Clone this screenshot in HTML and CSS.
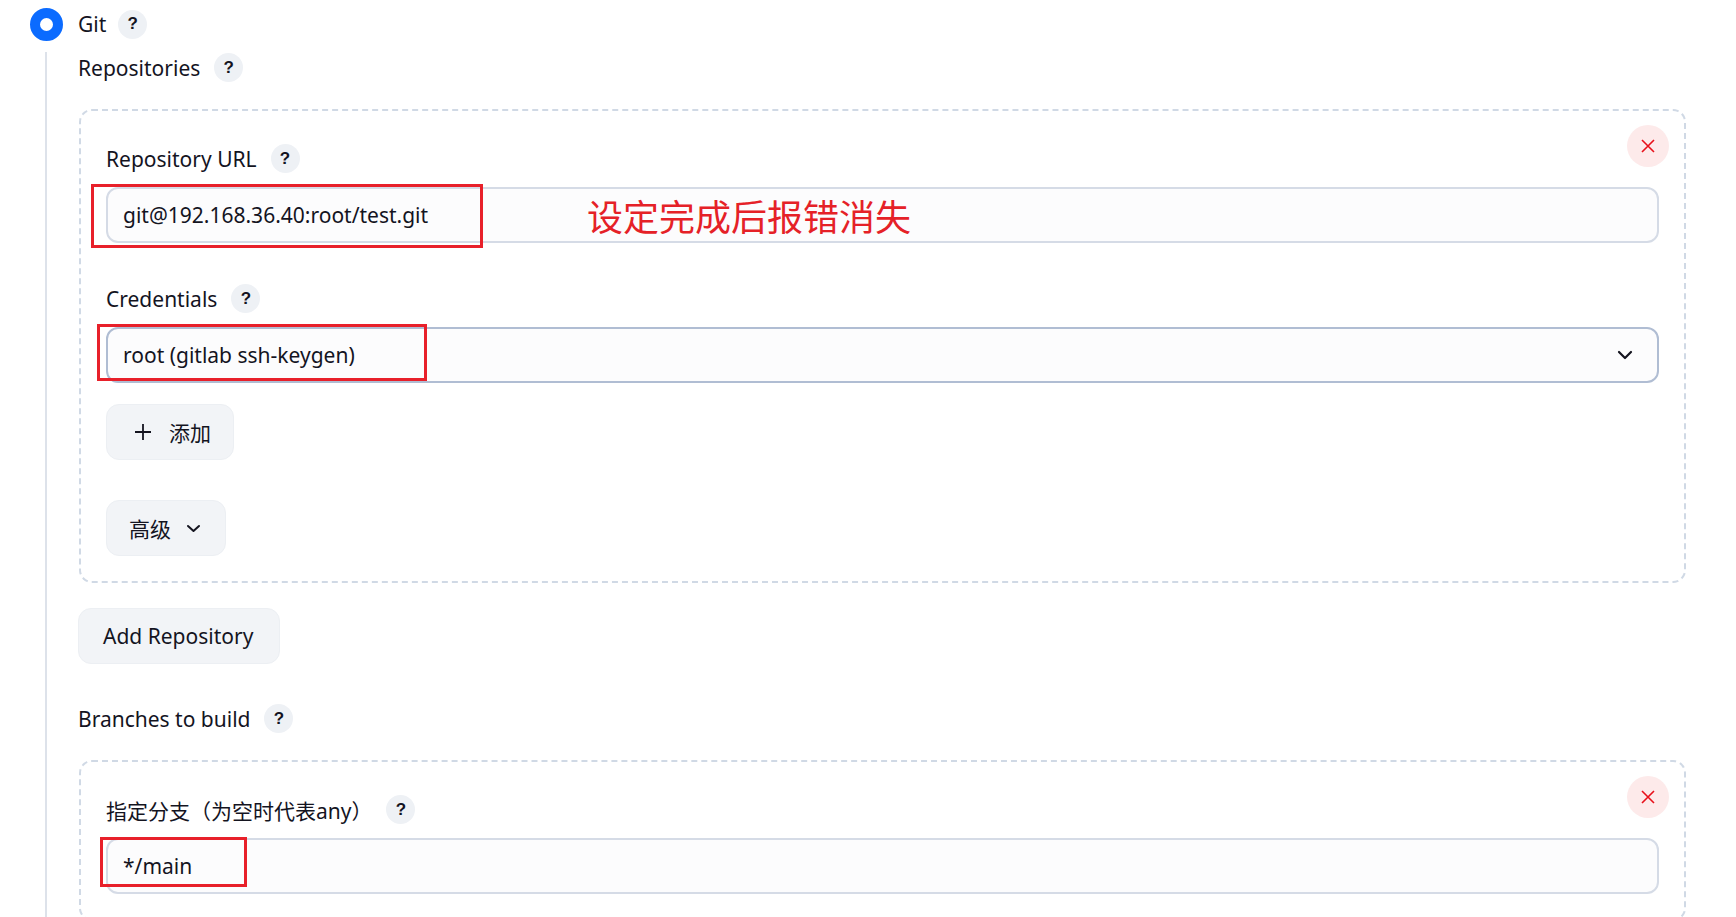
FILE: index.html
```html
<!DOCTYPE html>
<html lang="zh-CN">
<head>
  <meta charset="UTF-8" />
  <meta name="viewport" content="width=device-width, initial-scale=1.0"/>
  <title>Git - 源码管理</title>
  <link rel="stylesheet" href="styles.css">
</head>
<body>

  <div class="page">
    <div class="radio-row">
      <span class="radio"></span>
      <span class="radio-label">Git</span>
      <span class="help">?</span>
    </div>

    <div class="radio-body">
      <div class="field-label">Repositories <span class="help">?</span></div>

      <div class="repeated">
        <button class="close" title="删除">
          <svg width="14" height="14" viewBox="0 0 14 14"><path d="M1 1 L13 13 M13 1 L1 13" stroke="#e8101a" stroke-width="1.6" fill="none"/></svg>
        </button>

        <div class="field">
          <div class="field-label">Repository URL <span class="help">?</span></div>
          <div class="control">
            <input class="input" type="text" value="git@192.168.36.40:root/test.git">
            <span class="mark mark-url"></span>
            <span class="note">设定完成后报错消失</span>
          </div>
        </div>

        <div class="field">
          <div class="field-label">Credentials <span class="help">?</span></div>
          <div class="control">
            <div class="select">
              <span>root (gitlab ssh-keygen)</span>
              <svg width="16" height="10" viewBox="0 0 16 10"><path d="M2 2 L8 8 L14 2" stroke="#14141f" stroke-width="2.2" fill="none" stroke-linecap="round" stroke-linejoin="round"/></svg>
            </div>
            <span class="mark mark-cred"></span>
          </div>
          <button class="btn btn-add">
            <svg width="18" height="18" viewBox="0 0 18 18"><path d="M9 1 V17 M1 9 H17" stroke="#14141f" stroke-width="1.8" fill="none"/></svg>
            添加
          </button>
        </div>

        <button class="btn btn-advanced">
          高级
          <svg width="15" height="9" viewBox="0 0 15 9"><path d="M2 2 L7.5 7 L13 2" stroke="#14141f" stroke-width="2" fill="none" stroke-linecap="round" stroke-linejoin="round"/></svg>
        </button>
      </div>

      <button class="btn btn-repo">Add Repository</button>

      <div class="field-label branches">Branches to build <span class="help">?</span></div>

      <div class="repeated">
        <button class="close" title="删除">
          <svg width="14" height="14" viewBox="0 0 14 14"><path d="M1 1 L13 13 M13 1 L1 13" stroke="#e8101a" stroke-width="1.6" fill="none"/></svg>
        </button>
        <div class="field">
          <div class="field-label">指定分支（为空时代表any） <span class="help">?</span></div>
          <div class="control">
            <input class="input" type="text" value="*/main">
            <span class="mark mark-branch"></span>
          </div>
        </div>
      </div>
    </div>
  </div>

</body>
</html>
```

FILE: styles.css
```css
:root {
  --text-color: #14141f;
  --accent-color: #0b6bff;
  --line-color: #dde2ea;
  --dash-color: #d0d9e5;
  --input-border: #d5dbe6;
  --btn-bg: #f2f4f7;
  --mark-color: #e8202a;
}

* {
  margin: 0;
  padding: 0;
  box-sizing: border-box;
}

body {
  font-family: 'Noto Sans', 'Noto Sans CJK SC', sans-serif;
  font-size: 21px;
  color: var(--text-color);
  background: #ffffff;
}

.page {
  padding: 7px 50px 0 30px;
}

.radio-row {
  display: flex;
  align-items: center;
  height: 34px;
}

.radio {
  width: 33px;
  height: 33px;
  border-radius: 50%;
  border: 10px solid var(--accent-color);
  background: #ffffff;
  margin-right: 15px;
}

.radio-label {
  margin-right: 12px;
}

.help {
  display: inline-flex;
  align-items: center;
  justify-content: center;
  width: 29px;
  height: 29px;
  border-radius: 50%;
  background: #eef1f5;
  font-size: 17px;
  font-weight: 700;
  font-family: 'Liberation Sans', sans-serif;
}

.radio-body {
  margin: 11px 0 0 15px;
  border-left: 2px solid var(--line-color);
  padding: 1px 0 40px 31px;
}

.field-label {
  display: flex;
  align-items: center;
  gap: 14px;
  height: 29px;
}

.repeated {
  position: relative;
  margin: 27px 0 0 1px;
  border: 2px dashed var(--dash-color);
  border-radius: 13px;
  padding: 33px 25px 25px 25px;
}

.close {
  position: absolute;
  top: 14px;
  right: 15px;
  width: 42px;
  height: 42px;
  border: none;
  border-radius: 50%;
  background: #fdeaea;
  display: flex;
  align-items: center;
  justify-content: center;
}

.field + .field {
  margin-top: 41px;
}

.control {
  position: relative;
  margin-top: 14px;
}

.input,
.select {
  display: flex;
  align-items: center;
  width: 100%;
  height: 56px;
  border: 2px solid var(--input-border);
  border-radius: 12px;
  background: #fcfcfd;
  padding: 0 24px 0 15px;
  font: inherit;
  color: var(--text-color);
}

.select {
  justify-content: space-between;
  border-color: #b0bdd3;
}

.mark {
  position: absolute;
  border: 3px solid var(--mark-color);
}

.mark-url {
  left: -15px;
  top: -3px;
  width: 392px;
  height: 64px;
}

.mark-cred {
  left: -9px;
  top: -3px;
  width: 330px;
  height: 57px;
}

.mark-branch {
  left: -6px;
  top: -1px;
  width: 147px;
  height: 50px;
}

.note {
  position: absolute;
  left: 481px;
  top: 7px;
  font-family: 'Noto Sans CJK SC', sans-serif;
  font-size: 36px;
  line-height: 42px;
  color: #e52127;
}

.btn {
  display: flex;
  align-items: center;
  height: 56px;
  border: 1px solid #eceff3;
  border-radius: 13px;
  background: var(--btn-bg);
  font: inherit;
  color: var(--text-color);
  cursor: pointer;
}

.btn-add {
  margin-top: 21px;
  padding: 0 22px 0 27px;
  gap: 17px;
}

.btn-advanced {
  margin-top: 40px;
  padding: 0 24px 0 22px;
  gap: 15px;
}

.btn-repo {
  margin-top: 25px;
  padding: 0 26px 0 24px;
}

.branches {
  margin-top: 40px;
}
```
